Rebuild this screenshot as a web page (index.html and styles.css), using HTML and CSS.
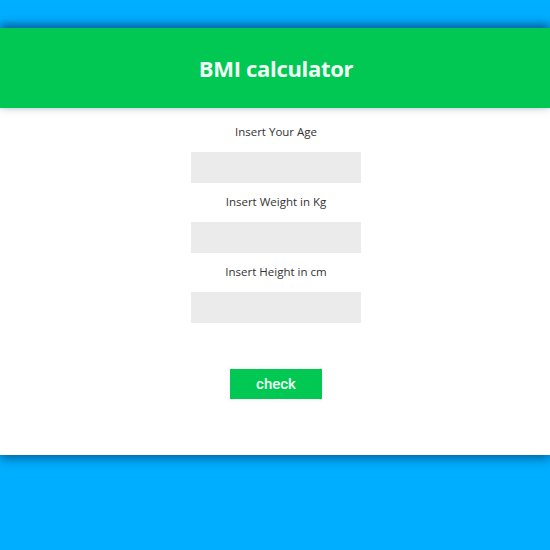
FILE: index.html
```html
<!DOCTYPE html>
<html>
<head>
<meta charset="utf-8">
<link rel="stylesheet" href="styles.css">
</head>
<body>
<div class="app">
  <header class="header"><h1 class="title">BMI calculator</h1></header>
  <main class="panel">
    <form class="form">
      <label class="label">Insert Your Age</label>
      <input class="field" type="text">
      <label class="label">Insert Weight in Kg</label>
      <input class="field" type="text">
      <label class="label">Insert Height in cm</label>
      <input class="field" type="text">
      <button class="btn" type="button">check</button>
    </form>
  </main>
</div>
</body>
</html>
```
FILE: styles.css
```css
html, body {
  margin: 0;
  padding: 0;
  height: 100%;
}
body {
  background: #00aeff;
  font-family: "Open Sans", "Noto Sans", sans-serif;
}
.app {
  padding-top: 28px;
}
.header {
  background: #00c853;
  height: 80px;
  display: flex;
  align-items: center;
  justify-content: center;
  box-shadow: 0 -3px 9px rgba(0, 40, 80, 0.65);
  position: relative;
  z-index: 1;
}
.title {
  margin: 0 0 0 2px;
  color: #f2fff6;
  font-size: 22px;
  font-weight: 700;
  letter-spacing: -0.3px;
}
.panel {
  background: #fff;
  height: 347px;
  box-shadow: 0 3px 10px rgba(0, 40, 80, 0.6);
}
.form {
  display: flex;
  flex-direction: column;
  align-items: center;
  padding: 16px 0 0 2px;
}
.label {
  font-size: 11.5px;
  line-height: 16px;
  color: #333;
  margin-bottom: 12px;
}
.field {
  width: 170px;
  height: 31px;
  box-sizing: border-box;
  border: none;
  background: #ebebeb;
  margin: 0 0 11px;
  padding: 0;
}
.btn {
  margin-top: 35px;
  width: 92px;
  height: 30px;
  border: none;
  background: #00c853;
  color: #eefff3;
  font-family: Roboto, sans-serif;
  font-weight: 500;
  font-size: 15px;
  padding: 0;
  box-shadow: 0 0 6px rgba(0, 0, 0, 0.06);
}
```
